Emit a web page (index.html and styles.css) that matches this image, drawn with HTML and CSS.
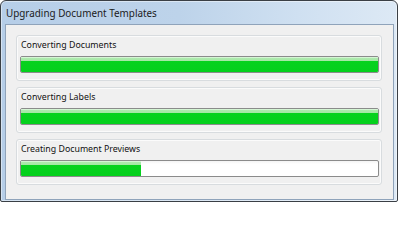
FILE: index.html
```html
<!DOCTYPE html>
<html>
<head>
<meta charset="utf-8">
<link rel="stylesheet" href="styles.css">
</head>
<body>
<div class="window">
  <div class="titlebar">Upgrading Document Templates</div>
  <div class="client">
    <div class="group">
      <div class="label">Converting Documents</div>
      <div class="bar"><div class="fill" style="width:100%"></div></div>
    </div>
    <div class="group">
      <div class="label">Converting Labels</div>
      <div class="bar"><div class="fill" style="width:100%"></div></div>
    </div>
    <div class="group">
      <div class="label">Creating Document Previews</div>
      <div class="bar"><div class="fill" style="width:33.5%"></div></div>
    </div>
  </div>
</div>
</body>
</html>
```
FILE: styles.css
```css
html, body {
  margin: 0;
  padding: 0;
  background: #ffffff;
}
body {
  width: 400px;
  height: 203px;
  font-family: "Noto Sans", "Open Sans", sans-serif;
}
.window {
  box-sizing: border-box;
  width: 398px;
  height: 202px;
  border: 1px solid #3a3f45;
  border-radius: 6px 6px 2px 2px;
  background: linear-gradient(to right, #b6cee8 0%, #bdd3ea 45%, #cfe0f1 75%, #dde9f5 100%);
  box-shadow: inset 0 0 0 1px rgba(255,255,255,0.45);
  display: flex;
  flex-direction: column;
  padding: 0 3px 1px 4px;
}
.titlebar {
  height: 23px;
  box-sizing: border-box;
  padding: 5px 0 0 1px;
  font-size: 9.9px;
  line-height: 14px;
  color: #1b1b1b;
  white-space: nowrap;
}
.client {
  flex: 1;
  box-sizing: border-box;
  background: #f0f0f0;
  border: 1px solid #8fa3ba;
  padding: 10px 11px 0 10px;
  display: flex;
  flex-direction: column;
  gap: 6px;
}
.group {
  box-sizing: border-box;
  height: 46px;
  border: 1px solid #d8dcdf;
  border-radius: 3px;
  box-shadow: inset 0 0 0 1px #fbfbfb;
  padding: 2px 2px 0 3px;
}
.label {
  font-size: 8.8px;
  line-height: 14px;
  color: #111111;
  padding-left: 1px;
  margin-bottom: 4px;
  white-space: nowrap;
}
.bar {
  box-sizing: border-box;
  height: 17px;
  border: 1px solid #8b8b8b;
  border-radius: 2px;
  background: linear-gradient(to bottom, #f4f4f4 0, #ffffff 3px, #ffffff 100%);
  overflow: hidden;
}
.fill {
  height: 100%;
  background: linear-gradient(to bottom, #d4f6d4 0, #d4f6d4 1px, #aeeaae 1px, #a4e7a4 4px, #06d21e 4px, #04d01c 100%);
}
```
